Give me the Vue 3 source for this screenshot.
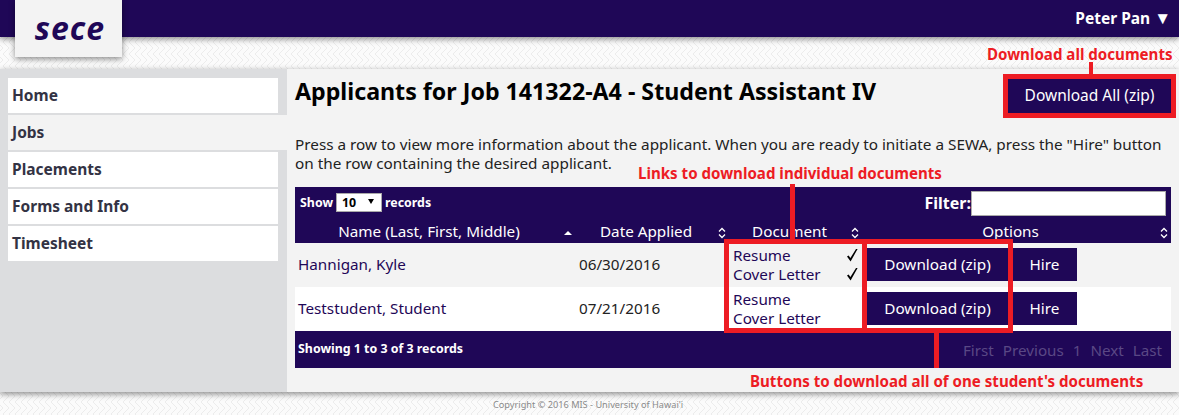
<template>
  <div class="page">
    <header class="topbar">
      <div class="logo">sece</div>
      <div class="user">Peter Pan <span class="caret">▼</span></div>
    </header>

    <div class="main">
      <nav class="sidebar">
        <a v-for="item in navItems" :key="item" class="nav-item" :class="{ active: item === 'Jobs' }">{{ item }}</a>
      </nav>

      <section class="content">
        <div class="title-row">
          <h1>Applicants for Job 141322-A4 - Student Assistant IV</h1>
          <button class="btn btn-all">Download All (zip)</button>
        </div>
        <p class="intro">
          Press a row to view more information about the applicant. When you are ready to initiate a SEWA, press the "Hire" button on the row containing the desired applicant.
        </p>

        <div class="table-wrap">
          <div class="table-top">
            <div class="show">
              Show
              <span class="select">10<i class="select-arrow"></i></span>
              records
            </div>
            <div class="filter">Filter:<input type="text" /></div>
          </div>
          <table>
            <colgroup>
              <col class="col-name" />
              <col class="col-date" />
              <col class="col-doc" />
              <col />
            </colgroup>
            <thead>
              <tr>
                <th v-for="col in columns" :key="col.label">
                  {{ col.label }}
                  <svg v-if="col.asc" class="sort" viewBox="0 0 10 12"><path d="M1 8h8L5 4z" fill="#fff" /></svg>
                  <svg v-else class="sort" viewBox="0 0 10 12"><path d="M2 4.5 5 1.5l3 3M2 7.5l3 3 3-3" fill="none" stroke="#fff" stroke-width="1.3" /></svg>
                </th>
              </tr>
            </thead>
            <tbody>
              <tr v-for="(row, i) in rows" :key="row.name" :class="i % 2 ? 'even' : 'odd'">
                <td>{{ row.name }}</td>
                <td>{{ row.date }}</td>
                <td class="docs">
                  <div v-for="doc in documents" :key="doc" class="doc">
                    <span>{{ doc }}</span>
                    <svg v-if="row.checked" class="check" viewBox="0 0 12 14"><path d="M1 8.5 2.6 7.4 4.4 10 10 1h1.6L4.6 13.4z" fill="#000" /></svg>
                  </div>
                </td>
                <td class="options">
                  <button class="btn btn-zip">Download (zip)</button>
                  <button class="btn btn-hire">Hire</button>
                </td>
              </tr>
            </tbody>
          </table>
          <div class="table-bottom">
            <span class="showing">Showing 1 to 3 of 3 records</span>
            <div class="pager">
              <span v-for="p in pager" :key="p">{{ p }}</span>
            </div>
          </div>
        </div>
      </section>
    </div>

    <footer class="footer">Copyright © 2016 MIS - University of Hawai'i</footer>

    <!-- red annotations pasted over the screenshot -->
    <div class="note note-all">Download all documents</div>
    <div class="note note-links">Links to download individual documents</div>
    <div class="note note-buttons">Buttons to download all of one student's documents</div>
    <div class="box box-all"></div>
    <div class="box box-docs"></div>
    <div class="box box-zip"></div>
    <div class="line line-all"></div>
    <div class="line line-docs"></div>
    <div class="line line-zip"></div>
  </div>
</template>

<script setup>
const navItems = ['Home', 'Jobs', 'Placements', 'Forms and Info', 'Timesheet']

const columns = [
  { label: 'Name (Last, First, Middle)', asc: true },
  { label: 'Date Applied' },
  { label: 'Document' },
  { label: 'Options' }
]

const documents = ['Resume', 'Cover Letter']

const rows = [
  { name: 'Hannigan, Kyle', date: '06/30/2016', checked: true },
  { name: 'Teststudent, Student', date: '07/21/2016', checked: false }
]

const pager = ['First', 'Previous', '1', 'Next', 'Last']
</script>

<style>
html, body {
  margin: 0;
  background: #fff;
}
</style>

<style scoped>
.page {
  position: relative;
  width: 1179px;
  height: 415px;
  overflow: hidden;
  font-family: "Noto Sans", "Open Sans", sans-serif;
  font-size: 15.5px;
  color: #222;
  background-color: #fbfbfb;
  background-image: url("data:image/svg+xml,%3Csvg xmlns='http://www.w3.org/2000/svg' width='12' height='12'%3E%3Cpath d='M0 3 3 0M3 6 6 3M6 3l3-3M9 6l3-3M0 9l3 3M3 6l3 3M6 9l3 3M9 6l3 3' fill='none' stroke='%23ececec' stroke-width='1'/%3E%3C/svg%3E");
}

.topbar {
  height: 37px;
  background: #1f0757;
  box-shadow: 0 2px 6px rgba(0, 0, 0, 0.45);
  display: flex;
  justify-content: space-between;
  position: relative;
  z-index: 2;
}

.logo {
  margin-left: 15px;
  width: 107px;
  height: 57px;
  box-sizing: border-box;
  padding-left: 3px;
  background: #f3f3f3;
  box-shadow: 0 2px 6px rgba(0, 0, 0, 0.45);
  color: #1f0757;
  font-size: 32px;
  font-weight: 700;
  font-style: italic;
  letter-spacing: 1px;
  text-align: center;
  line-height: 56px;
}

.user {
  color: #fff;
  font-weight: 700;
  font-size: 15.5px;
  padding: 6px 8px 0 0;
}

.caret {
  font-size: 17px;
}

.main {
  margin-top: 32px;
  height: 323px;
  display: flex;
  background: #f3f3f3;
  box-shadow: 0 2px 6px rgba(0, 0, 0, 0.45);
}

.sidebar {
  width: 287px;
  box-sizing: border-box;
  background: #dcdddf;
  padding: 9px 0 0 8px;
  display: flex;
  flex-direction: column;
  gap: 2px;
}

.nav-item {
  width: 270px;
  height: 35px;
  line-height: 35px;
  padding-left: 4px;
  box-sizing: border-box;
  background: #fff;
  color: #333344;
  font-weight: 700;
}

.nav-item.active {
  width: 279px;
  background: #f3f3f3;
}

.content {
  flex: 1;
  padding: 0 8px;
}

.title-row {
  display: flex;
  justify-content: space-between;
  height: 66px;
}

h1 {
  margin: 0;
  padding-top: 5px;
  font-size: 23.2px;
  line-height: 34px;
  font-weight: 700;
  color: #000;
}

.btn {
  border: 0;
  background: #1f0757;
  color: #fff;
  font-family: inherit;
  font-size: 15.3px;
  padding: 0 0 2px;
}

.btn-all {
  width: 163px;
  height: 34px;
  margin: 10px 0 0 0;
  font-size: 15.5px;
}

.intro {
  margin: 0;
  line-height: 19px;
  font-size: 15.3px;
  color: #222;
  width: 876px;
}

.table-wrap {
  margin-top: 14px;
  width: 876px;
}

.table-top {
  height: 32px;
  background: #1f0757;
  color: #fff;
  display: flex;
  justify-content: space-between;
  align-items: center;
  padding: 0 5px;
  font-size: 12.4px;
  font-weight: 700;
}

.show {
  display: flex;
  align-items: center;
  gap: 3px;
  padding-bottom: 1px;
}

.select {
  position: relative;
  display: block;
  width: 46px;
  height: 19px;
  box-sizing: border-box;
  border: 1px solid #aaa;
  background: #fff;
  color: #000;
  padding-left: 5px;
  line-height: 17px;
}

.select-arrow {
  position: absolute;
  right: 7px;
  top: 5px;
  border-left: 3px solid transparent;
  border-right: 3px solid transparent;
  border-top: 5px solid #000;
}

.filter {
  display: flex;
  align-items: center;
  font-size: 16px;
}

.filter input {
  width: 195px;
  height: 25px;
  box-sizing: border-box;
  border: 1px solid #aaa;
  background: #fff;
  padding: 0;
  margin: 0;
}

table {
  width: 876px;
  table-layout: fixed;
  border-collapse: collapse;
  font-size: 15.25px;
}

.col-name { width: 280px; }
.col-date { width: 154px; }
.col-doc { width: 133px; }

th {
  position: relative;
  height: 24px;
  padding: 1px 20px 0 8px;
  box-sizing: border-box;
  background: #1f0757;
  color: #fff;
  font-weight: 400;
  line-height: 23px;
}

.sort {
  position: absolute;
  right: 2px;
  top: 8px;
  width: 10px;
  height: 12px;
}

td {
  height: 44px;
  padding: 0 3px 2px 4px;
  box-sizing: border-box;
  color: #222;
}

td:first-child {
  padding-left: 3px;
  color: #1f0757;
}

.odd td { background: #f3f3f3; }
.even td { background: #fff; }

.doc {
  display: flex;
  justify-content: space-between;
  align-items: center;
  height: 19px;
  color: #1f0757;
  padding-right: 1px;
}

.check {
  width: 12px;
  height: 14px;
}

td.options {
  padding: 0 0 1px 5px;
}

.options .btn {
  height: 33px;
  vertical-align: middle;
}

.btn-zip {
  width: 141px;
}

.btn-hire {
  width: 65px;
  margin-left: 4px;
}

.table-bottom {
  height: 37px;
  background: #1f0757;
  display: flex;
  justify-content: space-between;
  align-items: center;
  padding: 0 9px 0 3px;
}

.showing {
  color: #fff;
  font-size: 12.4px;
  font-weight: 700;
  padding-bottom: 2px;
}

.pager {
  display: flex;
  gap: 9px;
  color: #5a4885;
  font-size: 15.2px;
}

.footer {
  margin-top: 7px;
  padding-left: 493px;
  font-size: 9.2px;
  line-height: 12px;
  color: #8a8a8a;
}

.note {
  position: absolute;
  color: #ed1c24;
  font-size: 15.1px;
  font-weight: 700;
  line-height: 18px;
  white-space: nowrap;
  z-index: 5;
}

.note-all { left: 987px; top: 45px; }
.note-links { left: 638px; top: 164px; }
.note-buttons { left: 750px; top: 372px; }

.box {
  position: absolute;
  box-sizing: border-box;
  border: 5px solid #ed1c24;
  z-index: 5;
}

.box-all { left: 1003px; top: 74px; width: 173px; height: 44px; }
.box-docs { left: 724px; top: 239px; width: 143px; height: 94px; }
.box-zip { left: 862px; top: 239px; width: 151px; height: 94px; }

.line {
  position: absolute;
  background: #ed1c24;
  z-index: 5;
}

.line-all { left: 1089px; top: 62px; width: 4px; height: 12px; }
.line-docs { left: 790px; top: 184px; width: 5px; height: 55px; }
.line-zip { left: 934px; top: 333px; width: 5px; height: 35px; }
</style>
